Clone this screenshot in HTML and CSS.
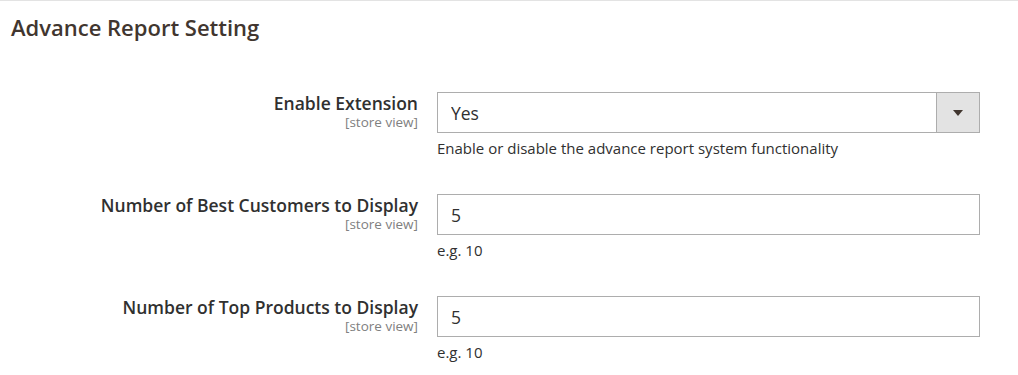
FILE: index.html
```html
<!DOCTYPE html>
<html lang="en">
<head>
    <meta charset="UTF-8">
    <title>Advance Report Setting</title>
    <link rel="stylesheet" href="styles.css">
</head>
<body>
    <div class="section">
        <h2 class="section-title">Advance Report Setting</h2>
        <form class="config-form">
            <div class="field">
                <div class="field-label">
                    <label for="enable">Enable Extension</label>
                    <span class="scope">[store view]</span>
                </div>
                <div class="field-control">
                    <div class="select-wrap">
                        <select id="enable" name="enable">
                            <option selected>Yes</option>
                            <option>No</option>
                        </select>
                        <span class="select-btn"><span class="arrow"></span></span>
                    </div>
                    <p class="note">Enable or disable the advance report system functionality</p>
                </div>
            </div>
            <div class="field">
                <div class="field-label">
                    <label for="customers">Number of Best Customers to Display</label>
                    <span class="scope">[store view]</span>
                </div>
                <div class="field-control">
                    <input type="text" id="customers" name="customers" value="5">
                    <p class="note">e.g. 10</p>
                </div>
            </div>
            <div class="field">
                <div class="field-label">
                    <label for="products">Number of Top Products to Display</label>
                    <span class="scope">[store view]</span>
                </div>
                <div class="field-control">
                    <input type="text" id="products" name="products" value="5">
                    <p class="note">e.g. 10</p>
                </div>
            </div>
        </form>
    </div>
</body>
</html>
```

FILE: styles.css
```css
body {
    margin: 0;
    font-family: "Open Sans", "Liberation Sans", sans-serif;
    background-color: #fff;
    color: #303030;
}
.section {
    border-top: 1px solid #e3e3e3;
    padding: 0 11px;
}
.section-title {
    margin: 0;
    padding-top: 11px;
    font-size: 22px;
    font-weight: 600;
    color: #41362f;
    line-height: 30px;
}
.config-form {
    padding-top: 50px;
}
.field {
    display: flex;
    column-gap: 19px;
    margin-bottom: 36px;
}
.field-label {
    width: 407px;
    text-align: right;
    padding-top: 1px;
}
.field-label label {
    display: block;
    font-size: 17.5px;
    font-weight: 600;
    line-height: 21px;
}
.scope {
    display: block;
    font-size: 13.5px;
    color: #808080;
    line-height: 17px;
}
.field-control {
    width: 543px;
}
.field-control input,
.select-wrap {
    box-sizing: border-box;
    width: 100%;
    height: 41px;
    border: 1px solid #adadad;
    background-color: #fff;
}
.field-control input {
    display: block;
    padding: 0 13px;
    font-family: inherit;
    font-size: 17.5px;
    color: #303030;
    outline: none;
}
.select-wrap {
    display: flex;
}
.select-wrap select {
    flex: 1;
    border: none;
    background: transparent;
    padding: 0 13px;
    font-family: inherit;
    font-size: 17.5px;
    color: #303030;
    appearance: none;
    outline: none;
}
.select-btn {
    width: 42px;
    border-left: 1px solid #adadad;
    background-color: #e3e3e3;
    display: flex;
    align-items: center;
    justify-content: center;
}
.arrow {
    width: 0;
    height: 0;
    border-left: 5px solid transparent;
    border-right: 5px solid transparent;
    border-top: 6px solid #41362f;
}
.note {
    margin: 5px 0 0;
    font-size: 15px;
    line-height: 20px;
    color: #303030;
}
```
